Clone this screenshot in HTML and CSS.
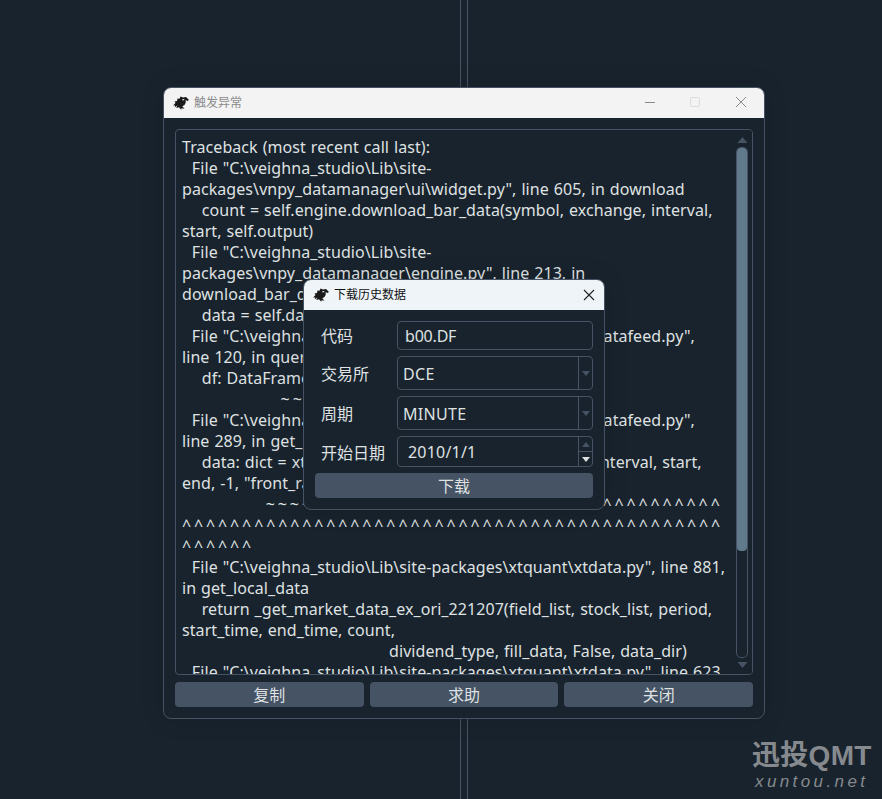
FILE: index.html
```html
<!DOCTYPE html>
<html lang="zh-CN">
<head>
<meta charset="utf-8">
<title>触发异常</title>
<link rel="stylesheet" href="styles.css">
</head>
<body>
<div class="desktop">
  <div class="backline"></div>

  <section class="window error-window">
    <header class="titlebar light">
      <svg class="logo" viewBox="0 0 16 14"><path fill-rule="evenodd" d="M0 9.500 2.500 7 1.500 5.500 4 5 4.500 2.500 6.500 2.800 7.500 .5 10 1.500 13 1 15.800 3.800 15 5 12.500 4.200 12.800 6.500 11.500 9 9.300 10.300 11.500 12.800 8.500 12.300 8.200 13.800 6 11.300 3.200 12 4.300 9.500 1.800 11.300 2 9.300ZM9 3.500 11 3 11.500 4 9.800 4.500Z"/></svg>
      <span class="title muted">触发异常</span>
      <div class="win-controls">
        <svg class="wc" viewBox="0 0 46 30"><path d="M19 14.500h10" class="st-dark"/></svg>
        <svg class="wc" viewBox="0 0 46 30"><rect x="18.500" y="9.500" width="9" height="9" rx="1" class="st-light"/></svg>
        <svg class="wc" viewBox="0 0 46 30"><path d="M18 9l10 10M28 9l-10 10" class="st-dark"/></svg>
      </div>
    </header>
    <div class="window-body">
      <div class="textbox">
<pre class="trace">Traceback (most recent call last):
  File "C:\veighna_studio\Lib\site-
packages\vnpy_datamanager\ui\widget.py", line 605, in download
    count = self.engine.download_bar_data(symbol, exchange, interval,
start, self.output)
  File "C:\veighna_studio\Lib\site-
packages\vnpy_datamanager\engine.py", line 213, in
download_bar_data
    data = self.datafeed.query_bar_history(req, output)
  File "C:\veighna_studio\Lib\site-packages\vnpy_xt\xt_datafeed.py",
line 120, in query_bar_history
    df: DataFrame = get_history_df(req, output)
                    <span class="mark">~~~~~~~~^^^^^^^^^^</span>
  File "C:\veighna_studio\Lib\site-packages\vnpy_xt\xt_datafeed.py",
line 289, in get_history_df
    data: dict = xtdata.get_market_data_ex([], [symbol], interval, start,
end, -1, "front_ratio", False)
                 <span class="mark">~~~~~~~~~~~~~~~~~~~~~~~^^^^^^^^^^^^^^^</span>
<span class="mark">^^^^^^^^^^^^^^^^^^^^^^^^^^^^^^^^^^^^^^^^^^^^^</span>
<span class="mark">^^^^^^</span>
  File "C:\veighna_studio\Lib\site-packages\xtquant\xtdata.py", line 881,
in get_local_data
    return _get_market_data_ex_ori_221207(field_list, stock_list, period,
start_time, end_time, count,
                                          dividend_type, fill_data, False, data_dir)
  File "C:\veighna_studio\Lib\site-packages\xtquant\xtdata.py", line 623,</pre>
        <div class="vscroll">
          <svg class="arrow" viewBox="0 0 10 6"><path d="M5 0l5 6H0z"/></svg>
          <div class="track"><div class="handle"></div></div>
          <svg class="arrow" viewBox="0 0 10 6"><path d="M0 0h10L5 6z"/></svg>
        </div>
      </div>
      <div class="actions">
        <button class="btn">复制</button>
        <button class="btn">求助</button>
        <button class="btn">关闭</button>
      </div>
    </div>
  </section>

  <section class="window dialog">
    <header class="titlebar blue">
      <svg class="logo" viewBox="0 0 16 14"><path fill-rule="evenodd" d="M0 9.500 2.500 7 1.500 5.500 4 5 4.500 2.500 6.500 2.800 7.500 .5 10 1.500 13 1 15.800 3.800 15 5 12.500 4.200 12.800 6.500 11.500 9 9.300 10.300 11.500 12.800 8.500 12.300 8.200 13.800 6 11.300 3.200 12 4.300 9.500 1.800 11.300 2 9.300ZM9 3.500 11 3 11.500 4 9.800 4.500Z"/></svg>
      <span class="title">下载历史数据</span>
      <svg class="dlg-close" viewBox="0 0 12 12"><path d="M1 1l10 10M11 1L1 11"/></svg>
    </header>
    <div class="form">
      <label class="label first">代码</label>
      <div class="field input">b00.DF</div>
      <label class="label">交易所</label>
      <div class="field combo"><span class="val">DCE</span><span class="drop"><svg class="tri" viewBox="0 0 8 5"><path d="M0 0h8L4 5z"/></svg></span></div>
      <label class="label">周期</label>
      <div class="field combo"><span class="val">MINUTE</span><span class="drop"><svg class="tri" viewBox="0 0 8 5"><path d="M0 0h8L4 5z"/></svg></span></div>
      <label class="label">开始日期</label>
      <div class="field date"><span class="val">2010/1/1</span><span class="spin"><span class="spin-up"><svg class="tri" viewBox="0 0 8 5"><path d="M4 0l4 5H0z"/></svg></span><span class="spin-down"><svg class="tri hot" viewBox="0 0 8 5"><path d="M0 0h8L4 5z"/></svg></span></span></div>
      <button class="btn wide">下载</button>
    </div>
  </section>

  <div class="watermark">
    <div class="wm-top">迅投QMT</div>
    <div class="wm-bottom">xuntou.net</div>
  </div>
</div>
</body>
</html>
```

FILE: styles.css
```css
* { box-sizing: border-box; }
html, body { margin: 0; height: 100%; }
body { background: #19232d; font-family: "Noto Sans", "Noto Sans CJK SC", sans-serif; overflow: hidden; }

.desktop { position: relative; width: 882px; height: 799px; background: #19232d; overflow: hidden; }
.backline { position: absolute; left: 460px; top: 0; width: 8px; height: 799px; border-left: 1px solid #455364; border-right: 1px solid #455364; }

.window { position: absolute; display: flex; flex-direction: column; background: #19232d; border: 1px solid #455364; overflow: hidden; box-shadow: 0 0 24px rgba(0, 0, 0, .12); }
.error-window { left: 163px; top: 87px; width: 602px; height: 632px; border-radius: 8px; }
.dialog { left: 303px; top: 279px; width: 302px; height: 231px; border-radius: 8px; }

.titlebar { display: flex; align-items: center; flex: none; height: 30px; padding-left: 9px; }
.titlebar.light { background: #f3f3f3; }
.titlebar.blue { background: #eff4f9; }
.logo { width: 16px; height: 14px; margin-right: 5px; fill: #1a1a1a; flex: none; }
.title { font-size: 12px; color: #111; font-family: "Noto Sans CJK SC", sans-serif; padding-bottom: 4px; }
.title.muted { color: #8a8a8a; }
.win-controls { display: flex; margin-left: auto; }
.wc { width: 46px; height: 30px; fill: none; display: block; }
.st-dark { stroke: #8a8a8a; stroke-width: 1; }
.st-light { stroke: #dcdcdc; stroke-width: 1; }
.dlg-close { width: 12px; height: 12px; margin-left: auto; margin-right: 9px; fill: none; stroke: #222; stroke-width: 1.100; }

.window-body { flex: 1; display: flex; flex-direction: column; padding: 11px 11px 11px; gap: 7px; min-height: 0; }
.textbox { flex: 1; min-height: 0; position: relative; border: 1px solid #455364; border-radius: 4px; overflow: hidden; }
.trace { margin: 0; padding: 7px 0 0 6px; font: 16px/21px "Noto Sans", sans-serif; letter-spacing: 0.07px; word-spacing: 0.7px; color: #dfe1e2; white-space: pre; }
.mark { letter-spacing: 2.870px; }
.vscroll { position: absolute; right: 0; top: 0; bottom: 0; width: 20px; padding: 7px 0 6px; background: #19232d; display: flex; flex-direction: column; align-items: center; gap: 4px; }
.arrow { width: 11px; height: 6px; fill: #455364; flex: none; }
.track { flex: 1; width: 12px; border: 1px solid #455364; border-radius: 5px; display: flex; flex-direction: column; }
.handle { width: 100%; height: 403px; background: #60798b; border-radius: 4px; }

.actions { display: flex; gap: 6px; height: 25px; flex: none; }
.btn { flex: 1; border: 0; border-radius: 4px; background: #455364; color: #dfe1e2; font: 16px "Noto Sans CJK SC", sans-serif; padding: 0 0 2px; }

.form { flex: 1; display: grid; grid-template-columns: 60px 196px; grid-template-rows: 29px 34px 34px 31px 25px; column-gap: 16px; row-gap: 6px; padding: 11px 0 0 17px; align-content: start; }
.label { font: 16px "Noto Sans CJK SC", sans-serif; color: #dfe1e2; align-self: center; white-space: nowrap; }
.label.first { padding-bottom: 2px; }
.field { border: 1px solid #455364; border-radius: 4px; color: #dfe1e2; font: 16px "Noto Sans", sans-serif; display: flex; align-items: center; overflow: hidden; }
.input { padding-left: 7px; letter-spacing: -0.2px; }
.val { flex: 1; padding-left: 5px; }
.combo .val { padding-top: 2px; letter-spacing: 0.3px; }
.date .val { padding-left: 10px; letter-spacing: 0.2px; }
.drop { width: 14px; align-self: stretch; border-left: 1px solid #455364; display: flex; align-items: center; justify-content: center; }
.spin { width: 14px; align-self: stretch; border-left: 1px solid #455364; display: flex; flex-direction: column; }
.spin-up, .spin-down { flex: 1; display: flex; align-items: center; justify-content: center; }
.spin-up { border-bottom: 1px solid #455364; }
.tri { width: 8px; height: 5px; fill: #455364; }
.tri.hot { fill: #dfe1e2; }
.wide { grid-column: 1 / 3; margin-left: -6px; height: 25px; }

.watermark { position: absolute; left: 752px; top: 739px; width: 125px; color: #868a8e; }
.wm-top { font: bold 28px/33px "Liberation Sans", "Noto Sans CJK SC", sans-serif; letter-spacing: 0.3px; white-space: nowrap; }
.wm-bottom { font: italic 17px/20px "Liberation Sans", sans-serif; letter-spacing: 3.400px; white-space: nowrap; margin-left: 3px; }
```
